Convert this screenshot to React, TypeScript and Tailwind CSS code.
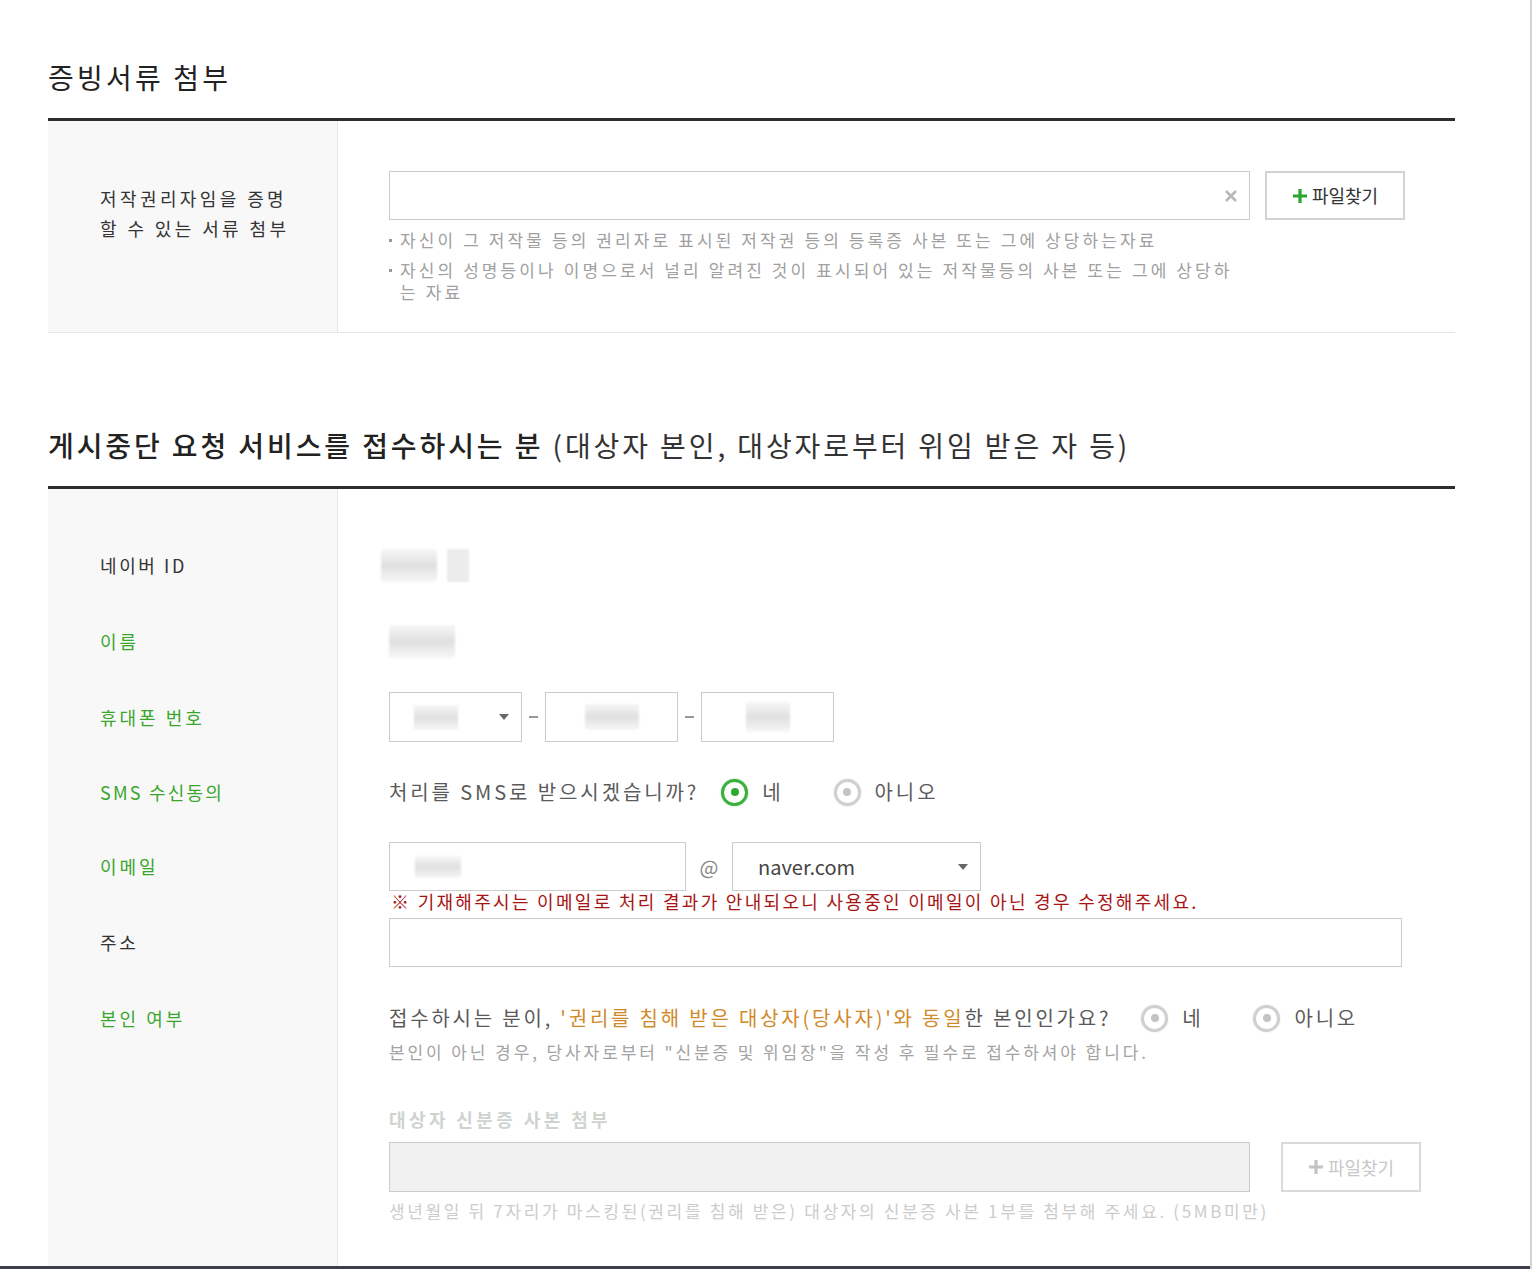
import React from 'react';

const FONT = "font-['Noto_Sans_CJK_KR','Noto_Sans',sans-serif]";

const Radio: React.FC<{ checked?: boolean }> = ({ checked }) => (
  <span
    className={
      checked
        ? 'flex h-[27px] w-[27px] shrink-0 items-center justify-center rounded-full border-[3px] border-[#3cb03c] bg-white shadow-[0_0_2px_#8fd88f]'
        : 'flex h-[27px] w-[27px] shrink-0 items-center justify-center rounded-full border-[3px] border-[#d0d0d0] bg-white shadow-[0_0_2px_#dddddd]'
    }
  >
    <span className={checked ? 'h-[8px] w-[8px] rounded-full bg-[#2fa82f]' : 'h-[8px] w-[8px] rounded-full bg-[#c4c4c4]'} />
  </span>
);

const Caret: React.FC = () => (
  <svg width="10" height="6" viewBox="0 0 10 6">
    <path d="M0 0h10L5 6z" fill="#666" />
  </svg>
);

const Plus: React.FC<{ color: string }> = ({ color }) => (
  <svg width="16" height="16" viewBox="0 0 16 16" className="mr-[4px]">
    <path d="M8 1v14M1 8h14" stroke={color} strokeWidth="3.2" />
  </svg>
);

// blurred placeholder for masked personal data
const Blur: React.FC<{ className: string }> = ({ className }) => (
  <span className={'block bg-linear-to-b from-[#f7f7f7] via-[#e0e0e0] to-[#f7f7f7] blur-[1px] ' + className} />
);

const Label: React.FC<{ text: string; green?: boolean }> = ({ text, green }) => (
  <span className={green ? 'text-[18px] tracking-[3px] text-[#3aa62c]' : 'text-[18px] tracking-[2.6px] text-[#333]'}>{text}</span>
);

const Note: React.FC<{ children: React.ReactNode }> = ({ children }) => (
  <li className="flex text-[17px] leading-[22px] tracking-[3.1px] text-[#a0a0a0]">
    <span className="flex h-[22px] w-[11px] shrink-0 items-center">
      <span className="h-[3px] w-[3px] bg-[#999]" />
    </span>
    <span>{children}</span>
  </li>
);

export default function App() {
  return (
    <div className={`${FONT} h-[1269px] w-[1532px] overflow-hidden border-r-2 border-[#d4d4d4] bg-white`}>
      <div className="ml-[48px] w-[1407px] pt-[57px]">
        {/* 증빙서류 첨부 */}
        <h2 className="mb-[21px] h-[40px] text-[28px] leading-[40px] tracking-[3.2px] text-[#222]">증빙서류 첨부</h2>
        <div className="flex border-t-[3px] border-b border-t-[#2e2e2e] border-b-[#e6e6e6]">
          <div className="w-[290px] shrink-0 border-r border-[#e6e6e6] bg-[#f8f8f8] pl-[52px] pt-[62px]">
            <p className="text-[18px] leading-[30px] tracking-[3.4px] text-[#333]">
              저작권리자임을 증명
              <br />할 수 있는 서류 첨부
            </p>
          </div>
          <div className="flex-1 pl-[51px] pt-[50px] pb-[29px]">
            <div className="flex">
              <div className="flex h-[49px] w-[861px] items-center justify-end border border-[#cccccc] pr-[12px]">
                <svg width="12" height="12" viewBox="0 0 12 12">
                  <path d="M1 1l10 10M11 1L1 11" stroke="#b8b8b8" strokeWidth="2.6" />
                </svg>
              </div>
              <button className="ml-[15px] flex h-[49px] w-[140px] items-center justify-center border-2 border-[#d3d3d3] bg-white text-[18px] text-[#333]">
                <Plus color="#2ca52c" />
                파일찾기
              </button>
            </div>
            <ul className="mt-[9px] flex w-[861px] flex-col gap-[8px]">
              <Note>자신이 그 저작물 등의 권리자로 표시된 저작권 등의 등록증 사본 또는 그에 상당하는자료</Note>
              <Note>
                자신의 성명등이나 이명으로서 널리 알려진 것이 표시되어 있는 저작물등의 사본 또는 그에 상당하
                <br />는 자료
              </Note>
            </ul>
          </div>
        </div>

        {/* 접수자 정보 */}
        <h2 className="mt-[92px] mb-[21px] h-[40px] whitespace-nowrap text-[28px] leading-[40px] tracking-[2.9px] text-[#333]">
          <span className="font-medium text-[#222]">게시중단 요청 서비스를 접수하시는 분</span> (대상자 본인, 대상자로부터 위임 받은 자 등)
        </h2>
        <div className="border-t-[3px] border-[#2e2e2e]">
          {/* 네이버 ID */}
          <div className="flex">
            <div className="w-[290px] shrink-0 border-r border-[#e6e6e6] bg-[#f8f8f8] pl-[52px] pt-[51px]">
              <div className="flex h-[50px] items-center">
                <Label text="네이버 ID" />
              </div>
            </div>
            <div className="flex-1 pl-[51px] pt-[51px]">
              <div className="-ml-[8px] flex h-[50px] items-center gap-[10px]">
                <Blur className="h-[33px] w-[56px]" />
                <span className="block h-[33px] w-[22px] bg-[#ececec] blur-[1px]" />
              </div>
            </div>
          </div>

          {/* 이름 */}
          <div className="flex">
            <div className="w-[290px] shrink-0 border-r border-[#e6e6e6] bg-[#f8f8f8] pl-[52px] pt-[26px]">
              <div className="flex h-[50px] items-center">
                <Label text="이름" green />
              </div>
            </div>
            <div className="flex-1 pl-[51px] pt-[26px]">
              <div className="flex h-[50px] items-center">
                <Blur className="h-[33px] w-[66px]" />
              </div>
            </div>
          </div>

          {/* 휴대폰 번호 */}
          <div className="flex">
            <div className="w-[290px] shrink-0 border-r border-[#e6e6e6] bg-[#f8f8f8] pl-[52px] pt-[26px]">
              <div className="flex h-[50px] items-center">
                <Label text="휴대폰 번호" green />
              </div>
            </div>
            <div className="flex-1 pl-[51px] pt-[26px]">
              <div className="flex h-[50px] items-center">
                <div className="flex h-[50px] w-[133px] items-center justify-between border border-[#cccccc] pl-[24px] pr-[12px]">
                  <Blur className="h-[25px] w-[44px]" />
                  <Caret />
                </div>
                <span className="mx-[7px] h-[2px] w-[9px] bg-[#999]" />
                <div className="flex h-[50px] w-[133px] items-center justify-center border border-[#cccccc]">
                  <Blur className="h-[26px] w-[54px]" />
                </div>
                <span className="mx-[7px] h-[2px] w-[9px] bg-[#999]" />
                <div className="flex h-[50px] w-[133px] items-center justify-center border border-[#cccccc]">
                  <Blur className="h-[30px] w-[44px]" />
                </div>
              </div>
            </div>
          </div>

          {/* SMS 수신동의 */}
          <div className="flex">
            <div className="w-[290px] shrink-0 border-r border-[#e6e6e6] bg-[#f8f8f8] pl-[52px] pt-[25px]">
              <div className="flex h-[50px] items-center">
                <span className="text-[18px] tracking-[2.2px] text-[#3aa62c]">SMS 수신동의</span>
              </div>
            </div>
            <div className="flex-1 pl-[51px] pt-[25px]">
              <div className="flex h-[50px] items-center text-[20px] tracking-[2.9px] text-[#5a5a5a]">
                <span>처리를 SMS로 받으시겠습니까?</span>
                <span className="ml-[22px] flex items-center">
                  <Radio checked />
                  <span className="ml-[14px]">네</span>
                </span>
                <span className="ml-[50px] flex items-center">
                  <Radio />
                  <span className="ml-[14px]">아니오</span>
                </span>
              </div>
            </div>
          </div>

          {/* 이메일 */}
          <div className="flex">
            <div className="w-[290px] shrink-0 border-r border-[#e6e6e6] bg-[#f8f8f8] pl-[52px] pt-[25px]">
              <div className="flex h-[49px] items-center">
                <Label text="이메일" green />
              </div>
            </div>
            <div className="flex-1 pl-[51px] pt-[25px]">
              <div className="flex h-[49px] items-center">
                <div className="flex h-[49px] w-[297px] items-center border border-[#cccccc] pl-[25px]">
                  <Blur className="h-[22px] w-[46px]" />
                </div>
                <span className="w-[46px] text-center text-[20px] text-[#888]">@</span>
                <div className="flex h-[49px] w-[249px] items-center justify-between border border-[#cccccc] pl-[25px] pr-[12px] text-[20px] text-[#444]">
                  <span>naver.com</span>
                  <Caret />
                </div>
              </div>
              <p className="ml-[2px] whitespace-nowrap text-[18px] leading-[20px] tracking-[2.3px] text-[#a81414]">
                ※ 기재해주시는 이메일로 처리 결과가 안내되오니 사용중인 이메일이 아닌 경우 수정해주세요.
              </p>
            </div>
          </div>

          {/* 주소 */}
          <div className="flex">
            <div className="w-[290px] shrink-0 border-r border-[#e6e6e6] bg-[#f8f8f8] pl-[52px] pt-[7px]">
              <div className="flex h-[49px] items-center">
                <Label text="주소" />
              </div>
            </div>
            <div className="flex-1 pl-[51px] pt-[7px]">
              <div className="h-[49px] w-[1013px] border border-[#cccccc]" />
            </div>
          </div>

          {/* 본인 여부 */}
          <div className="flex">
            <div className="w-[290px] shrink-0 border-r border-[#e6e6e6] bg-[#f8f8f8] pl-[52px] pt-[28px] pb-[44px]">
              <div className="flex h-[46px] items-center">
                <Label text="본인 여부" green />
              </div>
            </div>
            <div className="flex-1 pl-[51px] pt-[28px] pb-[44px]">
              <div className="flex h-[46px] items-center whitespace-nowrap text-[20px] tracking-[2.8px] text-[#5a5a5a]">
                <span>
                  접수하시는 분이, <span className="text-[#cf8a2c]">'권리를 침해 받은 대상자(당사자)'와 동일</span>한 본인인가요?
                </span>
                <span className="ml-[30px] flex items-center">
                  <Radio />
                  <span className="ml-[14px]">네</span>
                </span>
                <span className="ml-[50px] flex items-center">
                  <Radio />
                  <span className="ml-[14px]">아니오</span>
                </span>
              </div>
              <p className="whitespace-nowrap text-[17px] leading-[22px] tracking-[2.9px] text-[#a3a3a3]">
                본인이 아닌 경우, 당사자로부터 "신분증 및 위임장"을 작성 후 필수로 접수하셔야 합니다.
              </p>
              <p className="mt-[44px] text-[18px] font-bold leading-[24px] tracking-[3.4px] text-[#cfd3cf]">대상자 신분증 사본 첨부</p>
              <div className="mt-[11px] flex">
                <div className="h-[50px] w-[861px] border border-[#cccccc] bg-[#f0f0f0]" />
                <button className="ml-[31px] flex h-[50px] w-[140px] items-center justify-center border-2 border-[#dadada] bg-white text-[18px] text-[#c8c8c8]">
                  <Plus color="#c4c4c4" />
                  파일찾기
                </button>
              </div>
              <p className="mt-[8px] whitespace-nowrap text-[17px] leading-[22px] tracking-[2.65px] text-[#cccccc]">
                생년월일 뒤 7자리가 마스킹된(권리를 침해 받은) 대상자의 신분증 사본 1부를 첨부해 주세요. (5MB미만)
              </p>
            </div>
          </div>
        </div>
      </div>
      <div className="h-[3px] w-full bg-[#3d3f4a]" />
    </div>
  );
}
